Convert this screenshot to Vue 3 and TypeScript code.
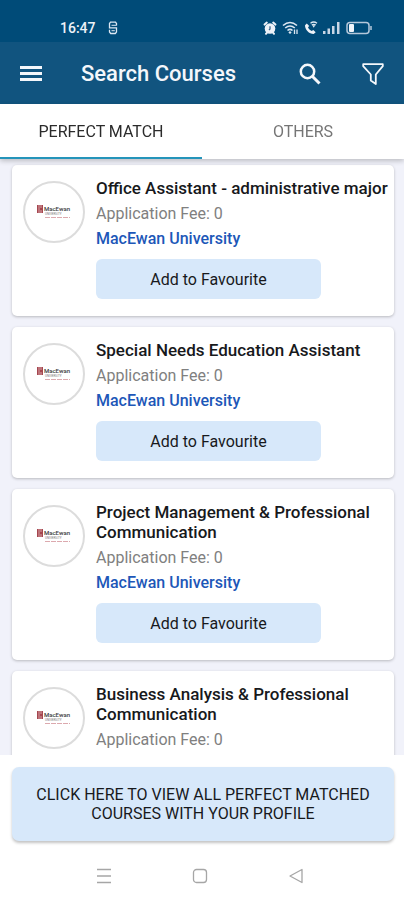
<script setup lang="ts">
import { ref } from 'vue'

interface Course {
  id: number
  title: string
  fee: number
  school: string
}

const tabs = ['PERFECT MATCH', 'OTHERS']
const activeTab = ref(0)

const courses: Course[] = [
  { id: 1, title: 'Office Assistant - administrative major', fee: 0, school: 'MacEwan University' },
  { id: 2, title: 'Special Needs Education Assistant', fee: 0, school: 'MacEwan University' },
  { id: 3, title: 'Project Management & Professional Communication', fee: 0, school: 'MacEwan University' },
  { id: 4, title: 'Business Analysis & Professional Communication', fee: 0, school: 'MacEwan University' },
]
</script>

<template>
  <div class="screen">
    <div class="status">
      <div class="status-group">
        <span class="clock">16:47</span>
        <svg width="10" height="14" viewBox="0 0 10 14" fill="none" stroke="#dce7f2" stroke-width="1.3">
          <path d="M8.500 4.500V2.500L7.500 1.200H2.500L1.500 2.500V6.800H8.500V11L7.300 12.500H2.700L1.500 11V8.800" />
          <path d="M3.500 4.300H8.500M3.500 9.700H6.800" stroke-width="1" />
        </svg>
      </div>
      <div class="status-group icons">
        <svg width="14" height="14" viewBox="0 0 14 14">
          <circle cx="7" cy="7.500" r="5.300" fill="#edf2f8" />
          <path d="M1.600 3.600L3.800 1.600M12.400 3.600L10.200 1.600M3.800 11.800L3 12.800M10.200 11.800L11 12.800" stroke="#edf2f8" stroke-width="2" stroke-linecap="round" />
          <path d="M7 5.300V8L6 9" stroke="#39688f" stroke-width="1.300" fill="none" />
        </svg>
        <svg width="17" height="14" viewBox="0 0 17 14" fill="none" stroke="#dce7f2" stroke-width="1.600">
          <path d="M1 4.500Q8 -1.500 15 4.500M3.200 7Q8 3 12.800 7M5.500 9.500Q8 7.300 10.500 9.500" />
          <path d="M8 10L9.600 11.500L8 13L6.400 11.500Z" fill="#dce7f2" stroke="none" />
          <path d="M12.500 8.500V13M15 8.500V13" stroke-width="1.300" />
        </svg>
        <svg width="14" height="14" viewBox="0 0 14 14">
          <path d="M2.800 2.500L1 4.300C1 9 5 13 9.700 13L11.700 11.300L9.300 8.900L7.700 10C6 9.300 4.700 8 4 6.300L5.200 4.900Z" fill="#edf2f8" />
          <path d="M6.500 2.200Q9.700 -0.200 13 2.200M7.800 4Q9.700 2.600 11.700 4" stroke="#dce7f2" stroke-width="1.300" fill="none" />
          <path d="M8.200 4.300H11.300L9.700 6.800Z" fill="#dce7f2" />
        </svg>
        <svg width="18" height="14" viewBox="0 0 18 14" fill="#c8d6e5">
          <rect x="0" y="10" width="2.500" height="3" />
          <rect x="4.500" y="7.500" width="2.500" height="5.500" />
          <rect x="9" y="5" width="2.500" height="8" />
          <rect x="14" y="1" width="2.500" height="12" />
        </svg>
        <svg width="26" height="14" viewBox="0 0 26 14">
          <rect x="1" y="1.500" width="22" height="11" rx="3" fill="none" stroke="#b5c8da" stroke-width="1.500" />
          <rect x="3" y="3" width="5" height="8" rx="1" fill="#f1f5fa" />
          <path d="M25 5V9" stroke="#b5c8da" stroke-width="1.500" />
        </svg>
      </div>
    </div>

    <header class="appbar">
      <button class="icon-btn" type="button" aria-label="Menu">
        <svg width="22" height="18" viewBox="0 0 22 18" fill="#f4f7fb">
          <rect y="1" width="22" height="3" />
          <rect y="7" width="22" height="3" />
          <rect y="13" width="22" height="3" />
        </svg>
      </button>
      <h1>Search Courses</h1>
      <button class="icon-btn" type="button" aria-label="Search">
        <svg width="22" height="22" viewBox="0 0 22 22" fill="none" stroke="#f4f7fb">
          <circle cx="8.500" cy="8.500" r="6.700" stroke-width="2.500" />
          <path d="M13.500 13.500L20.500 20.500" stroke-width="3" />
        </svg>
      </button>
      <button class="icon-btn" type="button" aria-label="Filter">
        <svg width="22" height="22" viewBox="0 0 22 22" fill="none" stroke="#f4f7fb" stroke-width="1.800" stroke-linejoin="round">
          <path d="M1.200 1.200H20.800V3.200L13.800 11.500V21L8.800 17.500V11.500L1.200 3.200Z" />
        </svg>
      </button>
    </header>

    <nav class="tabs">
      <button
        v-for="(tab, i) in tabs"
        :key="tab"
        type="button"
        :class="['tab', { active: activeTab === i }]"
        @click="activeTab = i"
      >
        {{ tab }}
      </button>
    </nav>

    <main class="list">
      <article v-for="course in courses" :key="course.id" class="card">
        <div class="avatar">
          <svg width="34" height="16" viewBox="0 0 34 16" role="img" aria-label="MacEwan University">
            <path d="M0 1H6V9H0Z" fill="#a5464f" />
            <path d="M2 1V9M4 1V4M4 6V9" stroke="#e3b9bd" stroke-width="0.800" />
            <text x="7" y="7" class="logo-name">MacEwan</text>
            <text x="8" y="11" class="logo-sub">UNIVERSITY</text>
            <path d="M8 13.500H33" stroke="#dca9ae" stroke-width="1" stroke-dasharray="5 1" />
          </svg>
        </div>
        <div class="info">
          <h2>{{ course.title }}</h2>
          <p class="fee">Application Fee: {{ course.fee }}</p>
          <a class="school" href="#">{{ course.school }}</a>
          <button class="fav" type="button">Add to Favourite</button>
        </div>
      </article>
    </main>

    <footer class="bottom">
      <button class="cta" type="button">CLICK HERE TO VIEW ALL PERFECT MATCHED COURSES WITH YOUR PROFILE</button>
    </footer>

    <div class="sysnav">
      <button class="sys-btn" type="button" aria-label="Recent apps">
        <svg width="16" height="16" viewBox="0 0 16 16" stroke="#a6a6a6" stroke-width="1.300">
          <path d="M1 1.500H15M1 8H15M1 14.500H15" />
        </svg>
      </button>
      <button class="sys-btn" type="button" aria-label="Home">
        <svg width="16" height="16" viewBox="0 0 16 16" fill="none" stroke="#a6a6a6" stroke-width="1.300">
          <rect x="1.500" y="1.500" width="13" height="13" rx="3" />
        </svg>
      </button>
      <button class="sys-btn" type="button" aria-label="Back">
        <svg width="16" height="16" viewBox="0 0 16 16" fill="none" stroke="#a6a6a6" stroke-width="1.300" stroke-linejoin="round">
          <path d="M14 1.500V14.500L2 8Z" />
        </svg>
      </button>
    </div>
  </div>
</template>

<style>
body {
  margin: 0;
  background: #fff;
}
</style>

<style scoped>
.screen {
  display: flex;
  flex-direction: column;
  height: 100vh;
  font-family: Roboto, "Liberation Sans", sans-serif;
  color: #17191c;
  background: #fff;
}

button {
  font-family: inherit;
  border: 0;
  padding: 0;
  background: none;
  cursor: pointer;
}

svg {
  display: block;
}

.status {
  display: flex;
  justify-content: space-between;
  align-items: center;
  padding: 20px 32px 6px 60px;
  background: #004b78;
}

.status-group {
  display: flex;
  align-items: center;
  gap: 12px;
}

.status-group.icons {
  gap: 5px;
}

.clock {
  font-size: 14px;
  line-height: 16px;
  font-weight: 500;
  color: #edf2f8;
}

.appbar {
  display: flex;
  align-items: center;
  padding: 12px 10px 10px;
  background: #11547f;
}

.icon-btn {
  display: grid;
  place-items: center;
  width: 42px;
  height: 40px;
}

.icon-btn + .icon-btn {
  margin-left: 21px;
}

h1 {
  flex: 1;
  margin: 0 0 0 29px;
  font-size: 22px;
  line-height: 28px;
  font-weight: 500;
  color: #f4f7fb;
}

.tabs {
  display: flex;
  position: relative;
  z-index: 1;
  background: #fff;
  box-shadow: 0 2px 5px rgba(0, 0, 0, 0.22);
}

.tab {
  flex: 1;
  height: 55px;
  padding-top: 2px;
  border-bottom: 2px solid transparent;
  font-size: 16px;
  color: #757575;
}

.tab.active {
  color: #2b2b2b;
  border-bottom-color: #2494ba;
}

.list {
  flex: 1;
  min-height: 0;
  display: flex;
  flex-direction: column;
  gap: 11px;
  padding: 6px 10px 0 12px;
  overflow-y: auto;
  scrollbar-width: none;
  background: #f1f2fa;
}

.card {
  flex: none;
  display: flex;
  align-items: flex-start;
  gap: 11px;
  padding: 13px 2px 17px 11px;
  border-radius: 5px;
  background: #fff;
  box-shadow: 0 1px 3px rgba(0, 0, 0, 0.24);
}

.avatar {
  flex: none;
  display: grid;
  place-items: center;
  box-sizing: border-box;
  width: 62px;
  height: 62px;
  margin-top: 3px;
  border: 2px solid #dcdcdc;
  border-radius: 50%;
}

.logo-name {
  font-size: 6px;
  font-weight: 500;
  fill: #3a3a3a;
}

.logo-sub {
  font-size: 3px;
  fill: #777;
}

.info {
  flex: 1;
  min-width: 0;
}

h2 {
  margin: 0 0 3px;
  font-size: 17px;
  line-height: 20px;
  font-weight: 500;
}

.fee {
  margin: 0;
  font-size: 16px;
  line-height: 25px;
  color: #808080;
}

.school {
  display: block;
  font-size: 16px;
  line-height: 25px;
  font-weight: 500;
  color: #1d57b8;
  text-decoration: none;
}

.fav {
  display: block;
  width: 76%;
  height: 40px;
  margin-top: 8px;
  border-radius: 6px;
  background: #d7e8fa;
  font-size: 16px;
  color: #17191c;
}

.bottom {
  padding: 12px 10px 12px 12px;
  background: #fff;
}

.cta {
  display: block;
  width: 100%;
  padding: 18px 20px;
  border-radius: 7px;
  background: #d7e8fa;
  box-shadow: 0 2px 3px rgba(0, 0, 0, 0.24);
  font-size: 16px;
  line-height: 19px;
  color: #17191c;
}

.sysnav {
  display: flex;
  justify-content: center;
  gap: 56px;
  padding: 3px 4px 4px 0;
}

.sys-btn {
  display: grid;
  place-items: center;
  width: 40px;
  height: 40px;
}
</style>
